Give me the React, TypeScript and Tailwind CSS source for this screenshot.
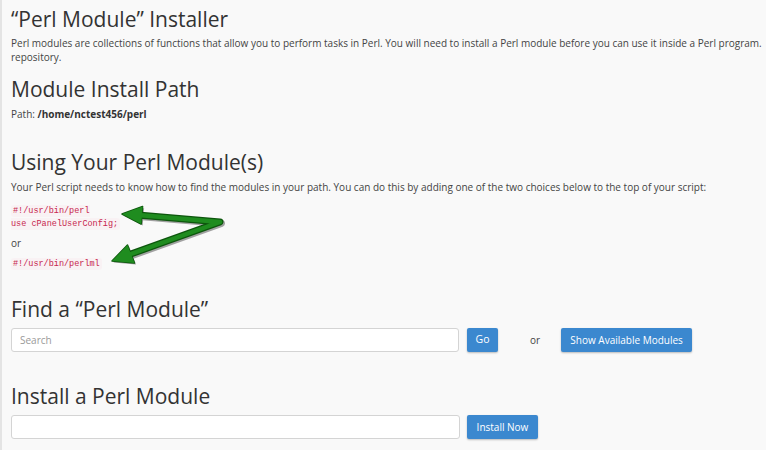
import React from "react";

function Arrows() {
  // coordinates relative to wrapper top (page y - 204)
  const oy = 204;
  const v = [220, 222 - oy];
  const up = [138, 215 - oy];
  const lo = [128, 255 - oy];
  const upHead = `122,${214 - oy} 142.6,${206.5 - oy} 141.2,${224 - oy}`;
  const loHead = `112,${261 - oy} 127.5,${245 - oy} 134.5,${263 - oy}`;
  const line = `M${up[0]},${up[1]} L${v[0]},${v[1]} L${lo[0]},${lo[1]}`;
  return (
    <svg
      className="absolute left-[-11px] top-0 pointer-events-none"
      width="240"
      height="70"
      viewBox="0 0 240 70"
    >
      <g transform="translate(1.5,1.5)" opacity="0.35">
        <path d={line} fill="none" stroke="#000" strokeWidth="7" strokeLinejoin="round" />
        <polygon points={upHead} fill="#000" />
        <polygon points={loHead} fill="#000" />
      </g>
      <path d={line} fill="none" stroke="#0d560d" strokeWidth="7" strokeLinejoin="round" />
      <polygon points={upHead} fill="#0d560d" stroke="#0d560d" strokeWidth="1.5" strokeLinejoin="round" />
      <polygon points={loHead} fill="#0d560d" stroke="#0d560d" strokeWidth="1.5" strokeLinejoin="round" />
      <path d={line} fill="none" stroke="#1f8c1f" strokeWidth="4.5" strokeLinejoin="round" />
      <polygon points={upHead} fill="#1f8c1f" />
      <polygon points={loHead} fill="#1f8c1f" />
    </svg>
  );
}

export default function App() {
  const heading =
    "text-[21px] leading-[24px] font-normal text-[#333] whitespace-nowrap";
  const para = "text-[10px] leading-[14px] text-[#444] whitespace-nowrap";
  const code =
    "text-[#c7254e] bg-[#f9f2f4] rounded-[3px] px-[2px] py-[1px]";
  const codeWrap = "font-['DejaVu_Sans_Mono',monospace] text-[8.5px]";
  return (
    <div
      className="w-[766px] h-[450px] overflow-hidden bg-[#f9f9f9] flex"
      style={{ fontFamily: "'Open Sans', 'Noto Sans', sans-serif" }}
    >
      <div className="w-[2px] bg-[#e4e4e4] shrink-0" />
      <div className="flex flex-col pl-[9px] flex-1 min-w-0">
        <h1 className={`${heading} mt-[7px]`}>“Perl Module” Installer</h1>
        <p className={`${para} mt-[5px]`}>
          Perl modules are collections of functions that allow you to perform tasks in Perl. You will need to install a Perl module before you can use it inside a Perl program.
          <br />
          repository.
        </p>

        <h2 className={`${heading} mt-[13px]`}>Module Install Path</h2>
        <p className={`${para} mt-[6px]`}>
          Path: <strong className="font-bold text-[#333]">/home/nctest456/perl</strong>
        </p>

        <h2 className={`${heading} mt-[29px]`}>Using Your Perl Module(s)</h2>
        <p className={`${para} mt-[6px]`}>
          Your Perl script needs to know how to find the modules in your path. You can do this by adding one of the two choices below to the top of your script:
        </p>

        <div className="relative mt-[10px]">
          <div className={`${codeWrap} leading-[12px]`}>
            <code className={code}>
              #!/usr/bin/perl
              <br />
              use cPanelUserConfig;
            </code>
          </div>
          <p className={`${para} mt-[6px]`}>or</p>
          <div className={`${codeWrap} leading-[14px] mt-[6px]`}>
            <code className={code}>#!/usr/bin/perlml</code>
          </div>
          <Arrows />
        </div>

        <h2 className={`${heading} mt-[26px]`}>Find a “Perl Module”</h2>
        <div className="flex items-center mt-[7px] h-[24px]">
          <input
            type="text"
            placeholder="Search"
            className="w-[448px] h-[24px] bg-white border border-[#d4d4d4] rounded-[3px] px-[8px] text-[10px] text-[#333] placeholder:text-[#9a9a9a] outline-none"
          />
          <button className="ml-[8px] w-[31px] h-[24px] bg-[#3b88cf] text-white text-[10.5px] rounded-[2px] shadow-[0_1px_2px_rgba(0,0,0,0.25)]">
            Go
          </button>
          <span className="ml-[32px] text-[10px] text-[#444]">or</span>
          <button className="ml-[21px] w-[131px] h-[24px] bg-[#3b88cf] text-white text-[10px] rounded-[2px] shadow-[0_1px_2px_rgba(0,0,0,0.25)]">
            Show Available Modules
          </button>
        </div>

        <h2 className={`${heading} mt-[32px]`}>Install a Perl Module</h2>
        <div className="flex items-center mt-[7px] h-[24px]">
          <input
            type="text"
            className="w-[449px] h-[24px] bg-white border border-[#d4d4d4] rounded-[3px] px-[8px] text-[10px] text-[#333] outline-none"
          />
          <button className="ml-[7px] w-[71px] h-[24px] bg-[#3b88cf] text-white text-[10px] rounded-[2px] shadow-[0_1px_2px_rgba(0,0,0,0.25)]">
            Install Now
          </button>
        </div>
      </div>
    </div>
  );
}
